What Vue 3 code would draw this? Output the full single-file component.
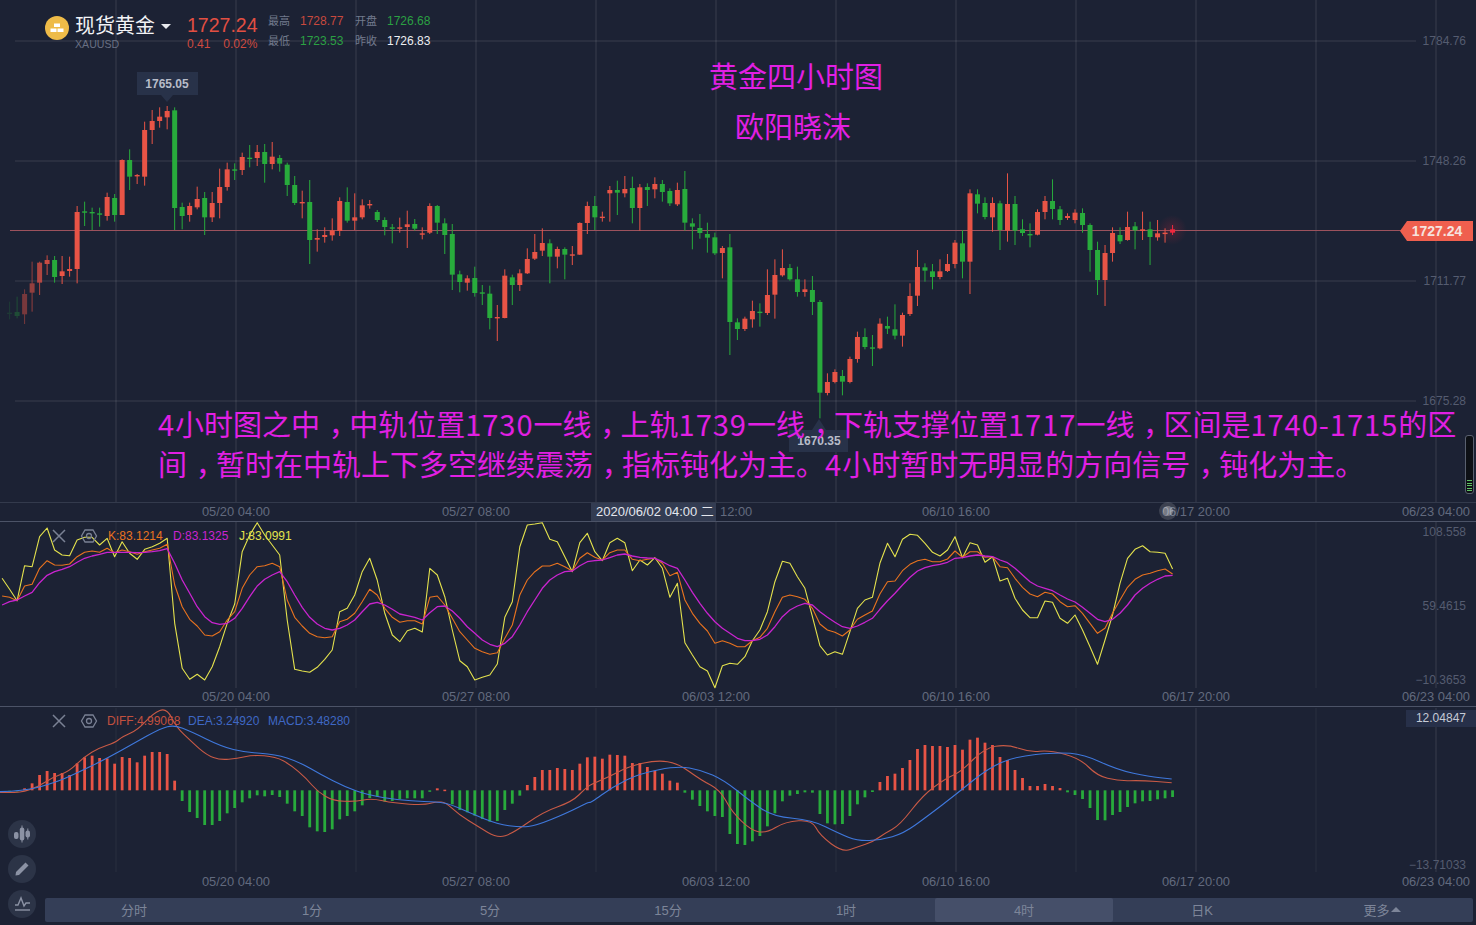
<script setup>
// 现货黄金 4小时K线 + KDJ + MACD
const barX = (i) => 9.6 + 7.503 * i

// top bottom wickTop wickBottom color，按截图测量的像素，y = offset + v / 3
const candleRows = [
  [130, `548 548 515 568 g,546 558 500 565 g,492 553 478 582 r,460 488 395 545 r,398 458 395 495 r,390 402 376 435 r,390 441 378 458 g,424 438 378 462 r,417 423 380 440 r,246 417 228 460 r,244 244 215 288 g,246 246 233 300 g,250 254 233 290 g,201 258 188 272 r,204 255 192 275 g,90 255 88 255 r,90 140 58 180 g,135 135 132 162 r`],
  [0, `390 530 365 557 r,363 390 330 432 r,350 363 322 383 r,333 352 318 388 r,331 624 322 690 g`],
  [130, `231 258 218 298 g,228 255 218 275 r,207 232 170 238 r,204 262 186 315 g,219 262 186 276 r,171 219 116 265 r,118 171 98 182 r,118 118 100 150 g,81 120 68 135 r,83 83 45 112 g,66 84 45 108 r,66 102 42 158 g,80 102 36 118 r,84 101 75 125 g,104 165 98 198 g,165 219 138 225 g,216 216 182 265 r,216 330 150 402 g,324 329 298 365 r,315 321 292 338 r,301 316 265 332 r,213 303 202 318 r,216 272 172 278 g,262 272 190 300 r,226 262 208 268 r,222 222 210 236 r,246 270 240 276 g,270 291 262 316 g,292 296 282 340 g,292 296 263 308 r,283 291 242 354 r,282 296 267 302 g,310 310 292 328 r,228 308 220 312 r,228 278 225 312 g,280 315 265 372 g,312 434 282 480 g,433 456 422 487 g,445 458 436 482 r,444 489 410 500 g,487 487 465 525 g,491 564 467 598 g,561 561 525 633 r,437 564 418 565 r,442 465 434 525 g,430 465 418 483 r,387 430 355 432 r,366 386 312 390 r,339 362 295 378 r,340 380 328 460 g,357 380 350 415 r,357 374 352 448 g,373 373 348 405 r,279 374 277 375 r,228 279 215 312 r`],
  [160, `138 172 108 210 g,170 170 155 185 r,90 100 78 185 r,90 98 62 165 g,87 100 48 112 r,84 144 50 190 g,82 144 72 212 r,81 90 70 138 g,72 88 52 115 r,72 96 60 125 g,93 130 85 138 g,90 133 68 138 r,87 188 33 212 g,190 200 175 268 g,204 219 162 236 g,222 233 188 278 g,232 280 218 285 g,264 279 258 355 r,262 486 222 585 g,487 507 475 540 g,476 507 470 513 r,453 478 422 503 r,455 455 430 500 g,405 459 328 465 r,345 404 298 476 r,324 346 268 350 r,324 358 312 362 g,358 396 320 410 g,388 396 358 410 r,390 426 348 465 g,426 698 420 775 g,666 699 640 706 r,636 666 628 670 r,648 665 630 706 g,597 666 590 670 r,531 597 515 608 r,531 561 505 568 g,562 562 525 618 g,491 565 475 568 r,498 506 470 522 g,508 527 433 538 g,465 527 458 560 r,408 462 370 468 r,321 407 270 438 r,322 332 310 365 g,334 351 312 388 g,334 351 298 358 r,312 333 282 336 r,248 312 240 325 r,250 305 210 355 g,100 305 88 402 r,103 131 88 160 g,129 171 112 178 g,129 172 112 215 r,130 210 122 270 g,132 212 40 245 r,132 212 108 255 g,208 219 178 228 g,222 222 190 262 g,156 224 148 226 r,123 156 108 178 r,123 147 58 178 g,148 180 138 195 g,168 174 160 180 r,158 180 148 190 r,159 195 145 218 g,195 270 190 335 g,270 360 245 405 g,279 360 255 438 r,219 279 202 305 r,225 244 202 252 g,201 240 155 242 r,199 211 186 268 g,208 213 155 240 r,208 231 185 315 g,220 232 180 242 r,218 218 205 248 r,208 218 195 225 b`],
]

const colors = { r: '#e85446', g: '#28ab3c', b: '#f0293f' }
const candles = candleRows
  .flatMap(([oy, text]) =>
    text.split(',').map((row) => {
      const [t, b, wt, wb, c] = row.split(' ')
      return { top: oy + t / 3, bottom: oy + b / 3, wickTop: oy + wt / 3, wickBottom: oy + wb / 3, color: colors[c] }
    }),
  )
  .map((c, i) => ({ ...c, x: barX(i), opacity: Math.min(1, Math.max(0.12, barX(i) / 55)) }))

// KDJ，第一个点在屏幕左边缘之外
const kdjLine = (values) =>
  values.map((v, i) => `${barX(i - 1).toFixed(1)},${(500 + v / 3).toFixed(1)}`).join(' ')

const lineJ = kdjLine([235,268,302,197,200,110,84,150,165,167,120,112,112,135,115,170,125,160,178,148,140,130,115,370,505,538,523,540,500,440,370,312,155,105,68,105,135,165,360,508,513,517,502,478,450,335,325,285,215,175,240,340,405,425,392,385,396,205,225,290,390,482,500,540,532,525,492,352,305,140,75,72,68,118,125,170,215,128,100,155,
  182,128,115,128,212,180,195,173,205,292,250,428,465,500,513,563,497,490,493,470,422,390,335,245,184,190,230,265,350,437,465,455,463,395,325,300,292,190,130,170,118,103,106,130,157,168,150,110,173,128,135,187,170,243,235,295,330,353,353,303,307,355,370,345,390,440,493,420,345,250,175,148,137,155,157,160,207])
const lineK = kdjLine([288,292,302,258,253,205,182,195,196,192,170,157,153,157,145,158,150,155,163,155,150,145,133,255,320,358,378,405,408,395,360,335,265,225,200,197,190,200,300,352,378,400,410,413,410,365,358,340,305,268,285,325,352,367,362,362,372,292,288,315,355,395,420,445,455,463,458,415,375,285,240,215,198,198,190,200,213,175,158,172,
  180,158,150,150,178,182,178,175,190,227,217,300,340,370,393,430,422,430,440,440,422,412,385,335,292,285,290,298,325,372,390,397,408,390,358,345,333,282,245,243,212,193,182,178,185,185,177,153,172,155,155,172,170,200,203,235,262,282,290,277,282,305,320,317,340,370,400,385,340,300,262,238,225,220,212,207,222])
const lineD = kdjLine([315,305,300,288,277,248,226,215,208,200,187,175,168,163,157,157,157,157,158,157,155,152,146,190,240,280,320,350,368,373,370,355,325,290,258,238,225,215,245,285,322,352,372,385,390,385,375,360,335,312,307,315,328,342,347,352,360,338,320,318,333,355,380,400,420,433,440,430,410,375,335,300,265,240,225,215,213,197,185,182,
  180,173,165,162,168,172,174,175,185,197,205,240,277,310,340,365,385,400,415,422,422,418,405,380,350,330,318,310,315,335,352,367,380,385,378,367,355,328,302,280,255,232,213,203,197,193,187,175,173,168,165,168,170,180,188,205,225,245,258,265,272,285,297,306,322,340,358,365,358,340,315,285,265,250,238,228,226])

// MACD 柱，数值是柱子的远端，256 为零轴
const macdValues = [264,262,250,235,210,198,204,204,210,175,157,152,159,160,176,156,159,172,152,141,141,147,227,288,321,339,360,360,348,325,309,292,280,271,274,270,276,296,319,333,367,379,381,373,343,333,319,301,279,275,290,288,282,280,280,280,259,250,254,298,315,322,332,342,350,348,315,296,272,240,216,195,195,189,192,195,176,157,
  155,161,149,150,152,174,174,186,197,206,227,233,263,284,303,319,333,336,387,417,420,409,393,364,325,289,272,267,262,263,327,355,358,357,333,298,277,261,231,213,206,189,165,132,120,123,123,126,120,134,104,98,113,120,156,165,195,219,243,243,237,243,249,262,270,282,309,345,346,330,321,306,295,289,288,283,280,276]
const macdBars = macdValues.map((v, i) => {
  const zero = 705 + 256 / 3
  const y = 705 + v / 3
  return {
    x: barX(i) - 1.4,
    y: Math.min(zero, y),
    h: Math.max(1.5, Math.abs(y - zero)),
    color: v < 256 ? colors.r : colors.g,
    opacity: i < 2 ? 0.4 : 1,
  }
})

// 取中点做二次曲线，线条平滑一点
const smooth = (pts) => {
  let d = `M${pts[0][0]} ${pts[0][1]}`
  for (let i = 1; i < pts.length - 1; i++) {
    const mx = (pts[i][0] + pts[i + 1][0]) / 2
    const my = (pts[i][1] + pts[i + 1][1]) / 2
    d += `Q${pts[i][0].toFixed(1)} ${pts[i][1].toFixed(1)} ${mx.toFixed(1)} ${my.toFixed(1)}`
  }
  const last = pts[pts.length - 1]
  return d + `L${last[0].toFixed(1)} ${last[1].toFixed(1)}`
}
const macdLine = (left, right) =>
  smooth([
    ...left.map(([x, y]) => [x / 2.613, 705 + y / 3]),
    ...right.map(([x, y]) => [590 + x / 2.613, 705 + y / 3]),
  ])

const diffPath = macdLine(
  [[0,262],[50,265],[100,245],[140,215],[180,200],[220,155],[260,128],[300,113],[320,95],[360,75],[400,25],[435,8],[460,65],[500,110],[540,150],[575,165],[620,160],[660,150],[720,155],[760,180],[800,220],[830,260],[870,288],[930,290],[970,280],[1030,295],[1110,300],[1140,290],[1165,292],[1200,330],[1250,365],[1300,400],[1340,385],[1420,320],[1495,290],[1530,250]],
  [[0,240],[50,215],[100,185],[175,165],[230,175],[290,225],[340,255],[370,320],[420,375],[460,385],[510,350],[580,345],[600,390],[660,442],[700,425],[740,410],[770,385],[810,360],[870,270],[930,220],[970,200],[1030,130],[1090,118],[1150,142],[1200,135],[1280,160],[1325,212],[1380,228],[1440,226],[1520,233]],
)
const deaPath = macdLine(
  [[0,260],[60,258],[140,235],[200,205],[280,160],[350,115],[420,70],[455,60],[500,80],[580,125],[640,142],[720,148],[780,170],[840,210],[900,245],[960,270],[1040,285],[1110,290],[1165,292],[1230,325],[1300,357],[1360,367],[1400,362],[1480,325],[1540,290]],
  [[0,295],[60,245],[130,205],[230,183],[290,195],[350,225],[420,290],[480,335],[580,345],[650,385],[700,408],[760,405],[820,385],[880,335],[960,265],[1040,190],[1110,155],[1220,142],[1290,148],[1380,195],[1460,215],[1520,222]],
)

const gridX = [116, 236, 356, 476, 596, 716, 836, 956, 1076, 1196, 1316, 1436]
const gridY = [41, 161, 281, 401]
const axisPrices = [
  { y: 45, text: '1784.76' },
  { y: 165, text: '1748.26' },
  { y: 285, text: '1711.77' },
  { y: 405, text: '1675.28' },
]
const timeRows = [
  { y: 516, labels: [[236, '05/20 04:00'], [476, '05/27 08:00'], [956, '06/10 16:00'], [1196, '06/17 20:00'], [1436, '06/23 04:00']] },
  { y: 701, labels: [[236, '05/20 04:00'], [476, '05/27 08:00'], [716, '06/03 12:00'], [956, '06/10 16:00'], [1196, '06/17 20:00'], [1436, '06/23 04:00']] },
  { y: 886, labels: [[236, '05/20 04:00'], [476, '05/27 08:00'], [716, '06/03 12:00'], [956, '06/10 16:00'], [1196, '06/17 20:00'], [1436, '06/23 04:00']] },
]
const tabs = ['分时', '1分', '5分', '15分', '1时', '4时', '日K', '更多']
const scaleTicks = [478, 481, 484, 487, 490]

// 数字和逗号要单独调整字距
const noteLines = [
  '4小时图之中，中轨位置1730一线，上轨1739一线，下轨支撑位置1717一线，区间是1740-1715的区',
  '间，暂时在中轨上下多空继续震荡，指标钝化为主。4小时暂时无明显的方向信号，钝化为主。',
].map((line) =>
  line.split(/(\d[\d-]*|，)/).filter(Boolean).map((text) => ({
    text,
    kind: text === '，' ? 'comma' : /^\d/.test(text) ? 'num' : '',
  })),
)
</script>

<template>
  <div class="page">
    <svg class="chart" width="1476" height="897" viewBox="0 0 1476 897">
      <defs>
        <radialGradient id="lastGlow">
          <stop offset="0" stop-color="#f0293f" stop-opacity="0.2" />
          <stop offset="1" stop-color="#f0293f" stop-opacity="0" />
        </radialGradient>
      </defs>

      <!-- 网格 -->
      <line v-for="y in gridY" :key="y" class="grid" x1="15" x2="1416" :y1="y" :y2="y" />
      <line v-for="x in gridX" :key="x" class="grid" :x1="x" :x2="x" y1="0" y2="502" />
      <template v-for="(x, i) in gridX" :key="'sub' + x">
        <line :class="i % 2 ? 'grid' : 'grid faint'" :x1="x" :x2="x" y1="522" y2="688" />
        <line :class="i % 2 ? 'grid' : 'grid faint'" :x1="x" :x2="x" y1="708" y2="872" />
      </template>
      <line class="divider faint" x1="0" x2="1476" y1="502.5" y2="502.5" />
      <line class="divider" x1="0" x2="1476" y1="521.5" y2="521.5" />
      <line class="divider" x1="0" x2="1476" y1="706.5" y2="706.5" />

      <!-- K线 -->
      <line class="price-line" x1="10" x2="1402" y1="230.5" y2="230.5" />
      <circle cx="1172" cy="230" r="15" fill="url(#lastGlow)" />
      <g v-for="(c, i) in candles" :key="i" :opacity="c.opacity">
        <line :x1="c.x" :x2="c.x" :y1="c.wickTop" :y2="c.wickBottom" :stroke="c.color" stroke-width="1" />
        <rect :x="c.x - 2.5" :y="c.top" width="5" :height="Math.max(1.4, c.bottom - c.top)" :fill="c.color" />
      </g>

      <!-- 价格标签 -->
      <text v-for="p in axisPrices" :key="p.y" class="axis" x="1466" :y="p.y" text-anchor="end">{{ p.text }}</text>
      <path class="price-tag" d="M1400 231 L1407 221 H1473 V241 H1407 Z" />
      <text class="price-tag-text" x="1437" y="235.500" text-anchor="middle">1727.24</text>

      <path class="tip" d="M137 72 H198 V95 H173 L167 102 L161 95 H137 Z" />
      <text class="tip-text" x="167" y="88" text-anchor="middle">1765.05</text>
      <path class="tip" d="M789 430 H812 L819 419 L826 430 H848 V452 H789 Z" />
      <text class="tip-text" x="819" y="445" text-anchor="middle">1670.35</text>

      <!-- 时间轴 -->
      <template v-for="row in timeRows" :key="row.y">
        <text
          v-for="[x, label] in row.labels"
          :key="x"
          class="axis time"
          :x="x"
          :y="row.y"
          text-anchor="middle"
        >{{ label }}</text>
      </template>
      <rect class="cross-box" x="591" y="503" width="125" height="18" />
      <text class="cross-text" x="596" y="516">2020/06/02 04:00 二</text>
      <text class="axis time" x="720" y="516">12:00</text>
      <circle cx="1168" cy="511" r="9" fill="#ffffff" opacity="0.14" />
      <circle cx="1168" cy="511" r="5" fill="#ffffff" opacity="0.3" />

      <!-- KDJ -->
      <polyline class="line" stroke="#e4e24d" :points="lineJ" />
      <polyline class="line" stroke="#e9731f" :points="lineK" />
      <polyline class="line thick" stroke="#c924cf" :points="lineD" />
      <path class="icon-x" d="M53 530 L65 542 M65 530 L53 542" />
      <path class="icon-gear" d="M85 530 H93 L96.500 536 L93 542 H85 L81.500 536 Z" />
      <circle class="icon-gear" cx="89" cy="536" r="2.500" />
      <text class="legend" x="108" y="540" fill="#e9731f">K:83.1214</text>
      <text class="legend" x="173" y="540" fill="#c924cf">D:83.1325</text>
      <text class="legend" x="239" y="540" fill="#e4e24d">J:83.0991</text>
      <text class="axis" x="1466" y="536" text-anchor="end">108.558</text>
      <text class="axis" x="1466" y="610" text-anchor="end">59.4615</text>
      <text class="axis" x="1466" y="684" text-anchor="end">−10.3653</text>

      <!-- MACD -->
      <rect
        v-for="(b, i) in macdBars"
        :key="i"
        :x="b.x"
        :y="b.y"
        width="2.800"
        :height="b.h"
        :fill="b.color"
        :opacity="b.opacity"
      />
      <path class="line" stroke="#c85a46" :d="diffPath" />
      <path class="line" stroke="#3f78dc" :d="deaPath" />
      <path class="icon-x" d="M53 715 L65 727 M65 715 L53 727" />
      <path class="icon-gear" d="M85 715 H93 L96.500 721 L93 727 H85 L81.500 721 Z" />
      <circle class="icon-gear" cx="89" cy="721" r="2.500" />
      <text class="legend" x="107" y="725" fill="#c2503f">DIFF:4.99068</text>
      <text class="legend" x="188" y="725" fill="#3f68c4">DEA:3.24920</text>
      <text class="legend" x="268" y="725" fill="#3f68c4">MACD:3.48280</text>
      <rect class="value-box" x="1406" y="710" width="70" height="17" />
      <text class="value-text" x="1466" y="722" text-anchor="end">12.04847</text>
      <text class="axis" x="1466" y="869" text-anchor="end">−13.71033</text>
    </svg>

    <!-- 行情头部 -->
    <div class="quote">
      <svg class="coin" width="24" height="24" viewBox="0 0 24 24">
        <circle cx="12" cy="12" r="12" fill="#eebb48" />
        <rect x="9" y="7.500" width="6" height="3.500" fill="#fff" />
        <rect x="5.500" y="12.500" width="6" height="3.500" fill="#fff" />
        <rect x="12.500" y="12.500" width="6" height="3.500" fill="#fff" />
      </svg>
      <div class="name">
        <div class="name-main">现货黄金<span class="caret"></span></div>
        <div class="name-code">XAUUSD</div>
      </div>
      <div class="last">
        <div class="last-price">1727.24</div>
        <div class="last-change"><span>0.41</span><span>0.02%</span></div>
      </div>
      <div class="stats">
        <span class="stat-label">最高</span><span class="up">1728.77</span>
        <span class="stat-label">开盘</span><span class="down">1726.68</span>
        <span class="stat-label">最低</span><span class="down">1723.53</span>
        <span class="stat-label">昨收</span><span class="plain">1726.83</span>
      </div>
    </div>

    <!-- 叠加的文字 -->
    <div class="note note-title">黄金四小时图</div>
    <div class="note note-author">欧阳晓沫</div>
    <div class="note note-body">
      <div v-for="(parts, n) in noteLines" :key="n" class="note-line">
        <span v-for="(p, i) in parts" :key="i" :class="p.kind">{{ p.text }}</span>
      </div>
    </div>

    <!-- 左侧工具 -->
    <div class="tools">
      <button class="tool">
        <svg width="20" height="20" viewBox="0 0 20 20" fill="#8b92a4">
          <rect x="2" y="8" width="4.500" height="7" rx="2" />
          <rect x="7.800" y="3.500" width="4.500" height="13" rx="2" />
          <rect x="13.500" y="6.500" width="4.500" height="7" rx="2" />
          <rect x="9.500" y="1.500" width="1" height="17" />
          <rect x="15.300" y="4.500" width="1" height="11" />
        </svg>
      </button>
      <button class="tool">
        <svg width="20" height="20" viewBox="0 0 20 20" fill="#8b92a4">
          <path d="M13.500 3.500 L16.500 6.500 L7 16 L3.500 16.500 L4 13 Z" />
        </svg>
      </button>
      <button class="tool">
        <svg width="20" height="20" viewBox="0 0 20 20" fill="none" stroke="#8b92a4" stroke-width="1.400">
          <path d="M3 11 H6 L9 4 L12 12 L14 9 H18" />
          <path d="M3 16 H18" />
        </svg>
      </button>
    </div>

    <!-- 缩放条 -->
    <div class="scale">
      <i v-for="y in scaleTicks" :key="y"></i>
    </div>

    <!-- 周期 -->
    <div class="tabs">
      <div v-for="t in tabs" :key="t" class="tab" :class="{ active: t === '4时' }">
        {{ t }}<span v-if="t === '更多'" class="more"></span>
      </div>
    </div>
  </div>
</template>

<style scoped>
.page {
  position: relative;
  display: flex;
  flex-direction: column;
  width: 1476px;
  height: 925px;
  overflow: hidden;
  background: #1c2234;
  font-family: "Liberation Sans", "Noto Sans CJK SC", sans-serif;
}

.chart {
  display: block;
  flex: none;
}

.grid {
  stroke: rgba(255, 255, 255, 0.13);
  stroke-width: 1;
}

.grid.faint {
  stroke: rgba(255, 255, 255, 0.06);
}

.divider {
  stroke: #4c5367;
  stroke-width: 1;
}

.divider.faint {
  stroke: #333a4c;
}

.price-line {
  stroke: #9c525d;
  stroke-width: 1;
}

.line {
  fill: none;
  stroke-width: 1.1;
  stroke-linejoin: round;
}

.line.thick {
  stroke-width: 1.300;
}

.axis {
  fill: #555c70;
  font-size: 12px;
}

.axis.time {
  fill: #626a7e;
  font-size: 12.900px;
}

.legend {
  font-size: 12px;
}

.price-tag {
  fill: #ef5f4e;
}

.price-tag-text {
  fill: #f6e3df;
  font-size: 14px;
  font-weight: 700;
}

.tip {
  fill: #283249;
}

.tip-text {
  fill: #b8bdc9;
  font-size: 12px;
  font-weight: 700;
}

.cross-box {
  fill: #333c52;
}

.cross-text {
  fill: #e4e7ee;
  font-size: 13px;
}

.icon-x,
.icon-gear {
  fill: none;
  stroke: #7a8194;
  stroke-width: 1.500;
}

.icon-gear {
  stroke-width: 1.300;
}

.value-box {
  fill: #273049;
}

.value-text {
  fill: #c5cad6;
  font-size: 12px;
}

/* 行情头部 */
.quote {
  position: absolute;
  top: 14px;
  left: 45px;
  display: flex;
  align-items: flex-start;
}

.coin {
  flex: none;
  margin-top: 2px;
}

.name {
  margin-left: 6px;
  width: 112px;
}

.name-main {
  display: flex;
  align-items: center;
  color: #f2f3f6;
  font-size: 20px;
  line-height: 24px;
}

.caret {
  margin-left: 6px;
  border: 5px solid transparent;
  border-top-color: #e8eaee;
  border-bottom-width: 0;
}

.name-code {
  color: #686f83;
  font-size: 10.600px;
  line-height: 12px;
}

.last {
  width: 81px;
}

.last-price {
  color: #e24f42;
  font-size: 19.500px;
  line-height: 22px;
}

.last-change {
  display: flex;
  gap: 13px;
  margin-top: 1px;
  color: #cf4a3f;
  font-size: 12px;
  line-height: 14px;
}

.stats {
  display: grid;
  grid-template-columns: 32px 55px 32px auto;
  row-gap: 6px;
  font-size: 12px;
  line-height: 14px;
}

.stat-label {
  color: #727a8d;
  font-size: 11px;
}

.up {
  color: #c8493e;
}

.down {
  color: #2ba043;
}

.plain {
  color: #eceef2;
}

/* 叠加文字 */
.note {
  position: absolute;
  color: #e11fe3;
  font-size: 29px;
  line-height: 40px;
  font-family: "Noto Sans CJK SC", sans-serif;
}

.note-title {
  top: 55px;
  left: 709px;
}

.note-author {
  top: 105px;
  left: 735px;
}

.note-body {
  top: 403px;
  left: 158px;
}

.note-line {
  white-space: nowrap;
}

.note-line span {
  display: inline-block;
  line-height: 32px;
}

.note-line .num {
  letter-spacing: 1px;
}

/* 逗号在格子里居中 */
.note-line .comma {
  padding-left: 0.3em;
  letter-spacing: -0.3em;
}

/* 左侧工具 */
.tools {
  position: absolute;
  left: 8px;
  top: 820px;
  display: flex;
  flex-direction: column;
  gap: 7px;
}

.tool {
  display: flex;
  align-items: center;
  justify-content: center;
  width: 28px;
  height: 28px;
  padding: 0;
  border: 0;
  border-radius: 50%;
  background: #2c3447;
}

/* 缩放条 */
.scale {
  position: absolute;
  top: 435px;
  left: 1465px;
  display: flex;
  flex-direction: column;
  justify-content: flex-end;
  gap: 1.500px;
  box-sizing: border-box;
  width: 9px;
  height: 59px;
  padding: 2px 1px;
  border: 1px solid #59606f;
  border-radius: 3px;
  background: #0d1015;
}

.scale i {
  display: block;
  height: 1px;
  background: #5fc263;
}

/* 周期 */
.tabs {
  display: flex;
  height: 24px;
  margin: 1px 3px 0 45px;
  border-radius: 2px;
  background: #343e57;
}

.tab {
  display: flex;
  flex: 0 0 178px;
  align-items: center;
  justify-content: center;
  box-sizing: border-box;
  padding-bottom: 2px;
  color: #7d8599;
  font-size: 13px;
}

.tab:last-child {
  flex: 1;
}

.tab.active {
  border-radius: 2px;
  background: #454f69;
}

.more {
  margin-left: 1px;
  border: 5px solid transparent;
  border-bottom-color: #7d8599;
  border-top-width: 0;
}
</style>
